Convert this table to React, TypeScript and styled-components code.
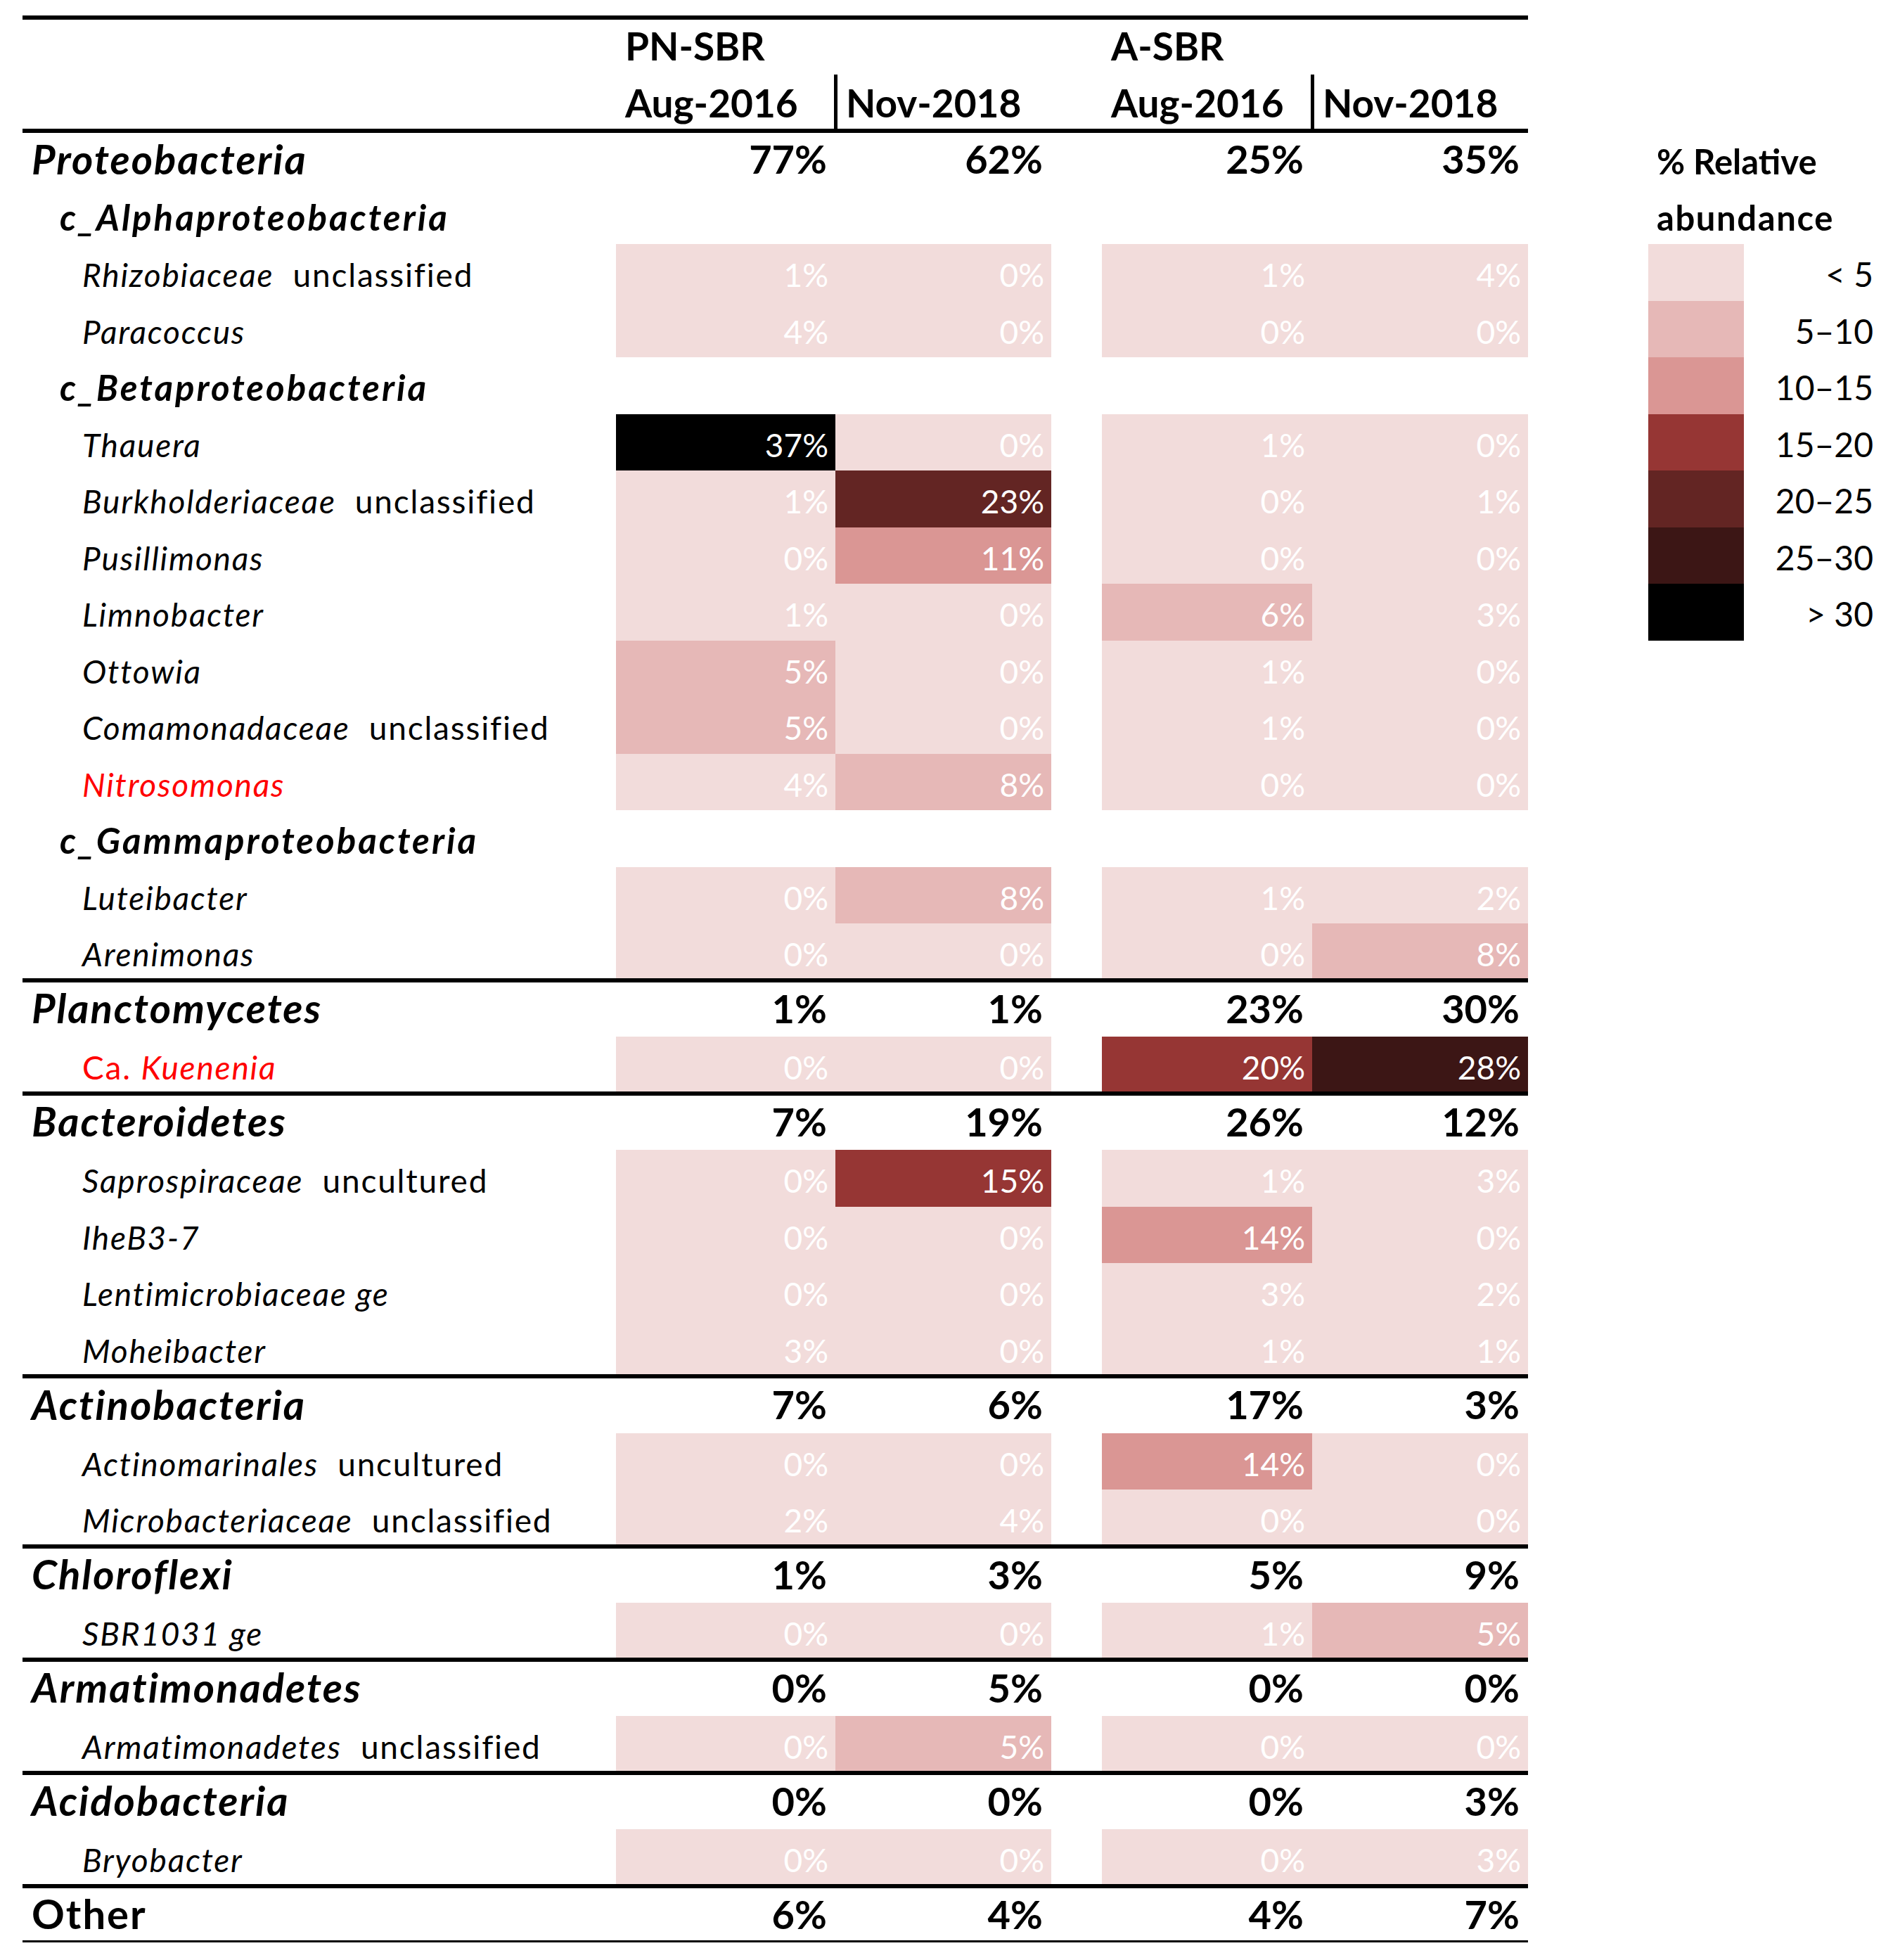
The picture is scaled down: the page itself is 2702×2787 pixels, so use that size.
import React from "react";
import styled, { createGlobalStyle, css } from "styled-components";

const GlobalStyle = createGlobalStyle`
  html, body {
    margin: 0;
    padding: 0;
    background: #ffffff;
  }
  body {
    font-family: Lato, "Liberation Sans", sans-serif;
    color: #000000;
  }
`;

const BINS = ["#F2DCDB", "#E6B8B7", "#DA9694", "#963634", "#632523", "#3C1615", "#000000"];
const BIN_LABELS = ["< 5", "5\u201310", "10\u201315", "15\u201320", "20\u201325", "25\u201330", "> 30"];

const binOf = (v: number) => {
  if (v < 5) return 0;
  if (v < 10) return 1;
  if (v < 15) return 2;
  if (v <= 20) return 3;
  if (v <= 25) return 4;
  if (v <= 30) return 5;
  return 6;
};

type Seg = { t: string; i?: boolean };
type DataRow =
  | { kind: "phylum"; name: string; values: number[]; upright?: boolean }
  | { kind: "class"; name: string }
  | { kind: "genus"; name: Seg[]; values: number[]; red?: boolean }
  | { kind: "rule" };

const g = (t: string, rest?: string): Seg[] => (rest ? [{ t, i: true }, { t: rest }] : [{ t, i: true }]);

const ROWS: DataRow[] = [
  { kind: "phylum", name: "Proteobacteria", values: [77, 62, 25, 35] },
  { kind: "class", name: "c_Alphaproteobacteria" },
  { kind: "genus", name: g("Rhizobiaceae", "  unclassified"), values: [1, 0, 1, 4] },
  { kind: "genus", name: g("Paracoccus"), values: [4, 0, 0, 0] },
  { kind: "class", name: "c_Betaproteobacteria" },
  { kind: "genus", name: g("Thauera"), values: [37, 0, 1, 0] },
  { kind: "genus", name: g("Burkholderiaceae", "  unclassified"), values: [1, 23, 0, 1] },
  { kind: "genus", name: g("Pusillimonas"), values: [0, 11, 0, 0] },
  { kind: "genus", name: g("Limnobacter"), values: [1, 0, 6, 3] },
  { kind: "genus", name: g("Ottowia"), values: [5, 0, 1, 0] },
  { kind: "genus", name: g("Comamonadaceae", "  unclassified"), values: [5, 0, 1, 0] },
  { kind: "genus", name: g("Nitrosomonas"), values: [4, 8, 0, 0], red: true },
  { kind: "class", name: "c_Gammaproteobacteria" },
  { kind: "genus", name: g("Luteibacter"), values: [0, 8, 1, 2] },
  { kind: "genus", name: g("Arenimonas"), values: [0, 0, 0, 8] },
  { kind: "rule" },
  { kind: "phylum", name: "Planctomycetes", values: [1, 1, 23, 30] },
  { kind: "genus", name: [{ t: "Ca. " }, { t: "Kuenenia", i: true }], values: [0, 0, 20, 28], red: true },
  { kind: "rule" },
  { kind: "phylum", name: "Bacteroidetes", values: [7, 19, 26, 12] },
  { kind: "genus", name: g("Saprospiraceae", "  uncultured"), values: [0, 15, 1, 3] },
  { kind: "genus", name: g("IheB3-7"), values: [0, 0, 14, 0] },
  { kind: "genus", name: g("Lentimicrobiaceae ge"), values: [0, 0, 3, 2] },
  { kind: "genus", name: g("Moheibacter"), values: [3, 0, 1, 1] },
  { kind: "rule" },
  { kind: "phylum", name: "Actinobacteria", values: [7, 6, 17, 3] },
  { kind: "genus", name: g("Actinomarinales", "  uncultured"), values: [0, 0, 14, 0] },
  { kind: "genus", name: g("Microbacteriaceae", "  unclassified"), values: [2, 4, 0, 0] },
  { kind: "rule" },
  { kind: "phylum", name: "Chloroflexi", values: [1, 3, 5, 9] },
  { kind: "genus", name: g("SBR1031 ge"), values: [0, 0, 1, 5] },
  { kind: "rule" },
  { kind: "phylum", name: "Armatimonadetes", values: [0, 5, 0, 0] },
  { kind: "genus", name: g("Armatimonadetes", "  unclassified"), values: [0, 5, 0, 0] },
  { kind: "rule" },
  { kind: "phylum", name: "Acidobacteria", values: [0, 0, 0, 3] },
  { kind: "genus", name: g("Bryobacter"), values: [0, 0, 0, 3] },
  { kind: "rule" },
  { kind: "phylum", name: "Other", values: [6, 4, 4, 7], upright: true },
  { kind: "rule" },
];

const Page = styled.div`
  display: flex;
  align-items: flex-start;
  width: 2702px;
  box-sizing: border-box;
  padding: 25px 0 0 32px;
`;

const Table = styled.div`
  display: flex;
  flex-direction: column;
  width: 2141px;
  flex: none;
`;

const Rule = styled.div`
  height: 6px;
  margin: -3px 0;
  background: #000000;
`;

const Row = styled.div`
  display: grid;
  grid-template-columns: 844px 312px 307px 72px 299px 307px;
  height: 80.5px;
`;

const Cell = styled.div`
  display: flex;
  align-items: flex-end;
  box-sizing: border-box;
  line-height: 1;
  white-space: pre;
  padding-bottom: calc(18.5px - 0.113em);
`;

const HeadCell = styled(Cell)<{ $sep?: boolean }>`
  font-size: 55px;
  font-weight: 700;
  padding-left: 13px;
  ${(p) =>
    p.$sep &&
    css`
      border-left: 5px solid #000000;
      margin-left: -2px;
      padding-left: 12px;
    `}
`;

const levels = {
  phylum: { indent: 13, size: 58, weight: 700, spacing: 2 },
  class: { indent: 53, size: 51, weight: 700, spacing: 3 },
  genus: { indent: 85, size: 46, weight: 400, spacing: 1.8 },
};

const Label = styled(Cell)<{ $level: "phylum" | "class" | "genus"; $italic?: boolean; $red?: boolean }>`
  padding-left: ${(p) => levels[p.$level].indent}px;
  font-size: ${(p) => levels[p.$level].size}px;
  font-weight: ${(p) => levels[p.$level].weight};
  letter-spacing: ${(p) => levels[p.$level].spacing}px;
  font-style: ${(p) => (p.$italic ? "italic" : "normal")};
  color: ${(p) => (p.$red ? "#FF0000" : "#000000")};
`;

const Ital = styled.span`
  font-style: italic;
`;

const Total = styled(Cell)`
  justify-content: flex-end;
  padding-right: 12px;
  font-size: 56px;
  font-weight: 700;
`;

const Value = styled(Cell)<{ $bg: string }>`
  justify-content: flex-end;
  padding-right: 10px;
  font-size: 46px;
  font-weight: 400;
  color: #ffffff;
  background: ${(p) => p.$bg};
`;

const Legend = styled.div`
  display: flex;
  flex-direction: column;
  flex: none;
  margin-left: 171px;
  padding-top: 161px;
`;

const LegendTitle = styled(Cell)<{ $spacing?: number }>`
  height: 80.5px;
  padding-left: 12px;
  font-size: 49px;
  font-weight: 700;
  letter-spacing: ${(p) => p.$spacing ?? 0}px;
`;

const LegendRow = styled.div`
  display: grid;
  grid-template-columns: 136px 184px;
  height: 80.5px;
`;

const Swatch = styled.div<{ $bg: string }>`
  background: ${(p) => p.$bg};
`;

const LegendLabel = styled(Cell)`
  justify-content: flex-end;
  font-size: 48px;
  font-weight: 400;
`;

const Empty = styled.div``;

const Values: React.FC<{ values: number[]; total?: boolean }> = ({ values, total }) => {
  const render = (v: number, k: number) =>
    total ? (
      <Total key={k}>{v}%</Total>
    ) : (
      <Value key={k} $bg={BINS[binOf(v)]}>
        {v}%
      </Value>
    );
  return (
    <>
      {render(values[0], 0)}
      {render(values[1], 1)}
      <Empty />
      {render(values[2], 2)}
      {render(values[3], 3)}
    </>
  );
};

export default function App() {
  return (
    <>
      <GlobalStyle />
      <Page>
        <Table>
          <Rule />
          <Row>
            <Empty />
            <HeadCell>PN-SBR</HeadCell>
            <Empty />
            <Empty />
            <HeadCell>A-SBR</HeadCell>
            <Empty />
          </Row>
          <Row>
            <Empty />
            <HeadCell>Aug-2016</HeadCell>
            <HeadCell $sep>Nov-2018</HeadCell>
            <Empty />
            <HeadCell>Aug-2016</HeadCell>
            <HeadCell $sep>Nov-2018</HeadCell>
          </Row>
          <Rule />
          {ROWS.map((r, idx) => {
            if (r.kind === "rule") return <Rule key={idx} />;
            if (r.kind === "class")
              return (
                <Row key={idx}>
                  <Label $level="class" $italic>
                    {r.name}
                  </Label>
                </Row>
              );
            if (r.kind === "phylum")
              return (
                <Row key={idx}>
                  <Label $level="phylum" $italic={!r.upright}>
                    {r.name}
                  </Label>
                  <Values values={r.values} total />
                </Row>
              );
            return (
              <Row key={idx}>
                <Label $level="genus" $red={r.red}>
                  {r.name.map((s, k) => (s.i ? <Ital key={k}>{s.t}</Ital> : <span key={k}>{s.t}</span>))}
                </Label>
                <Values values={r.values} />
              </Row>
            );
          })}
        </Table>
        <Legend>
          <LegendTitle>% Relative</LegendTitle>
          <LegendTitle $spacing={1.6}>abundance</LegendTitle>
          {BINS.map((c, i) => (
            <LegendRow key={c}>
              <Swatch $bg={c} />
              <LegendLabel>{BIN_LABELS[i]}</LegendLabel>
            </LegendRow>
          ))}
        </Legend>
      </Page>
    </>
  );
}
